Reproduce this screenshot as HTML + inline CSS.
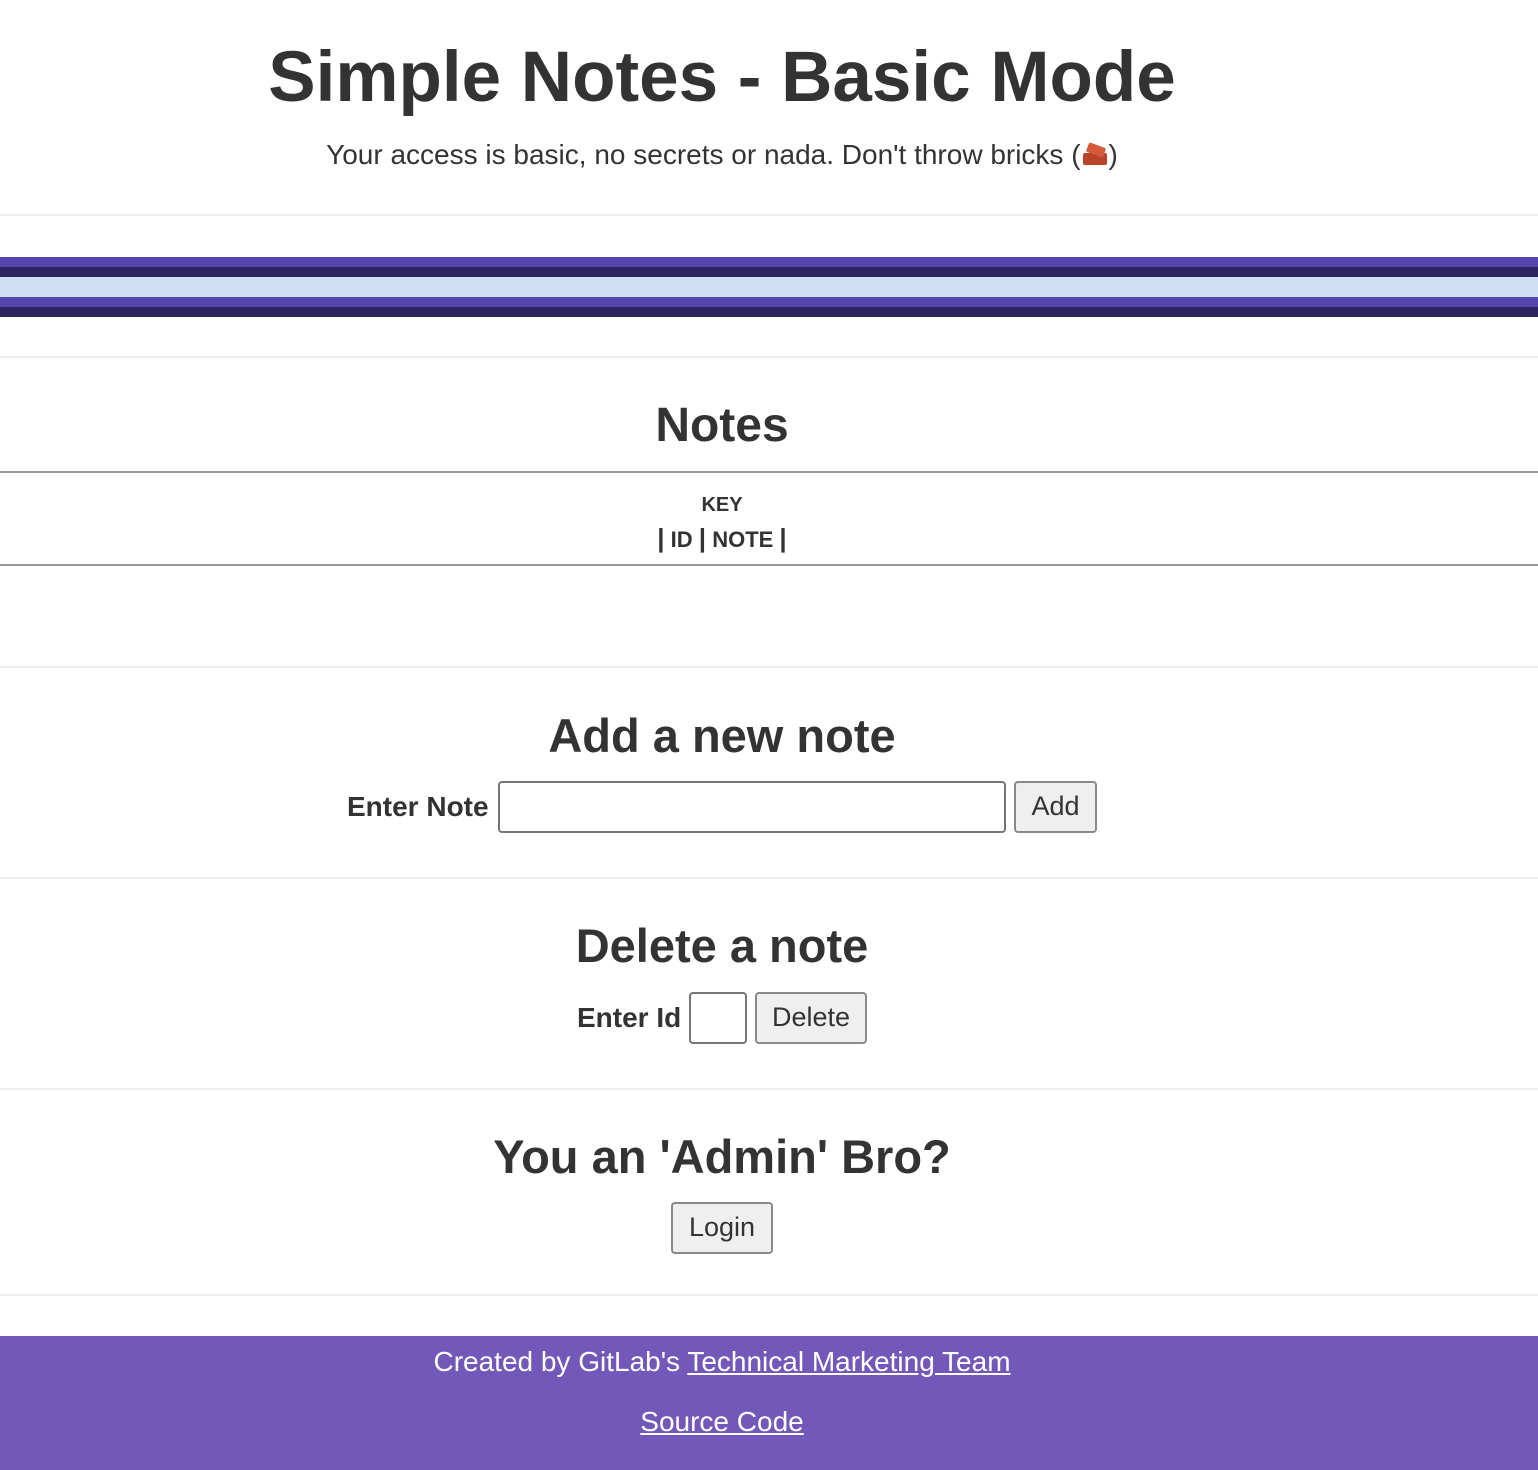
<!DOCTYPE html>
<html><head><meta charset="utf-8"><style>
html,body{margin:0;padding:0;width:1538px;height:1470px;background:#fff;overflow:hidden}
body{position:relative;font-family:"Liberation Sans",Arial,sans-serif;color:#333}
.c{position:absolute;left:0;width:1444px;text-align:center;white-space:nowrap}
.hr{position:absolute;left:0;width:1538px;height:2px;background:#eee}
.g{position:absolute;left:0;width:1538px;height:2px;background:#999}
.s{position:absolute;left:0;width:1538px}
.box{position:absolute;box-sizing:border-box;border:2px solid #767676;border-radius:4px;background:#fff}
.btn{position:absolute;box-sizing:border-box;border:2px solid #8a8a8a;border-radius:4px;background:#efefef;font-size:27px;text-align:center;line-height:47px;color:#333}
.lab{position:absolute;font-weight:bold;font-size:28px;white-space:nowrap}
a{color:#fff;text-decoration:underline}
</style></head><body>
<div class="c" style="top:36px;font-size:71px;font-weight:bold;line-height:84px">Simple Notes - Basic Mode</div>
<div class="c" style="top:138px;font-size:28px;line-height:34px">Your access is basic, no secrets or nada. Don't throw bricks (<span style="display:inline-block;width:28px;height:24px;vertical-align:-3px;position:relative"><span style="position:absolute;left:2px;top:10px;width:24px;height:12px;background:#b8422a;border-radius:2px"></span><span style="position:absolute;left:6px;top:2px;width:18px;height:10px;background:#d45a3a;border-radius:2px;transform:rotate(20deg)"></span></span>)</div>
<div class="hr" style="top:214px"></div>
<div class="s" style="top:257px;height:10px;background:#5645ad"></div>
<div class="s" style="top:267px;height:10px;background:#2e2560"></div>
<div class="s" style="top:277px;height:20px;background:#cfe0f5"></div>
<div class="s" style="top:297px;height:10px;background:#5645ad"></div>
<div class="s" style="top:307px;height:10px;background:#2e2560"></div>
<div class="hr" style="top:356px"></div>
<div class="c" style="top:401px;font-size:48px;font-weight:bold;line-height:50px">Notes</div>
<div class="g" style="top:471px"></div>
<div class="c" style="top:494px;font-size:20px;font-weight:bold;line-height:22px">KEY</div>
<div class="c" style="top:524px;font-size:22px;font-weight:bold;line-height:28px"><span style="font-size:26px">|</span> ID <span style="font-size:26px">|</span> NOTE <span style="font-size:26px">|</span></div>
<div class="g" style="top:564px"></div>
<div class="hr" style="top:666px"></div>
<div class="c" style="top:710px;font-size:47px;font-weight:bold;line-height:52px">Add a new note</div>
<div class="lab" style="left:347px;top:792px;line-height:30px">Enter Note</div>
<div class="box" style="left:498px;top:781px;width:508px;height:52px"></div>
<div class="btn" style="left:1014px;top:781px;width:83px;height:52px">Add</div>
<div class="hr" style="top:877px"></div>
<div class="c" style="top:920px;font-size:47px;font-weight:bold;line-height:52px">Delete a note</div>
<div class="lab" style="left:577px;top:1003px;line-height:30px">Enter Id</div>
<div class="box" style="left:689px;top:992px;width:58px;height:52px"></div>
<div class="btn" style="left:755px;top:992px;width:112px;height:52px">Delete</div>
<div class="hr" style="top:1088px"></div>
<div class="c" style="top:1131px;font-size:47px;font-weight:bold;line-height:52px">You an 'Admin' Bro?</div>
<div class="btn" style="left:671px;top:1202px;width:102px;height:52px">Login</div>
<div class="hr" style="top:1294px"></div>
<div class="s" style="top:1336px;height:134px;background:#7259b9"></div>
<div class="c" style="top:1345px;font-size:28px;line-height:34px;color:#fff">Created by GitLab's <a>Technical Marketing Team</a></div>
<div class="c" style="top:1405px;font-size:28px;line-height:34px;color:#fff"><a>Source Code</a></div>
</body></html>
